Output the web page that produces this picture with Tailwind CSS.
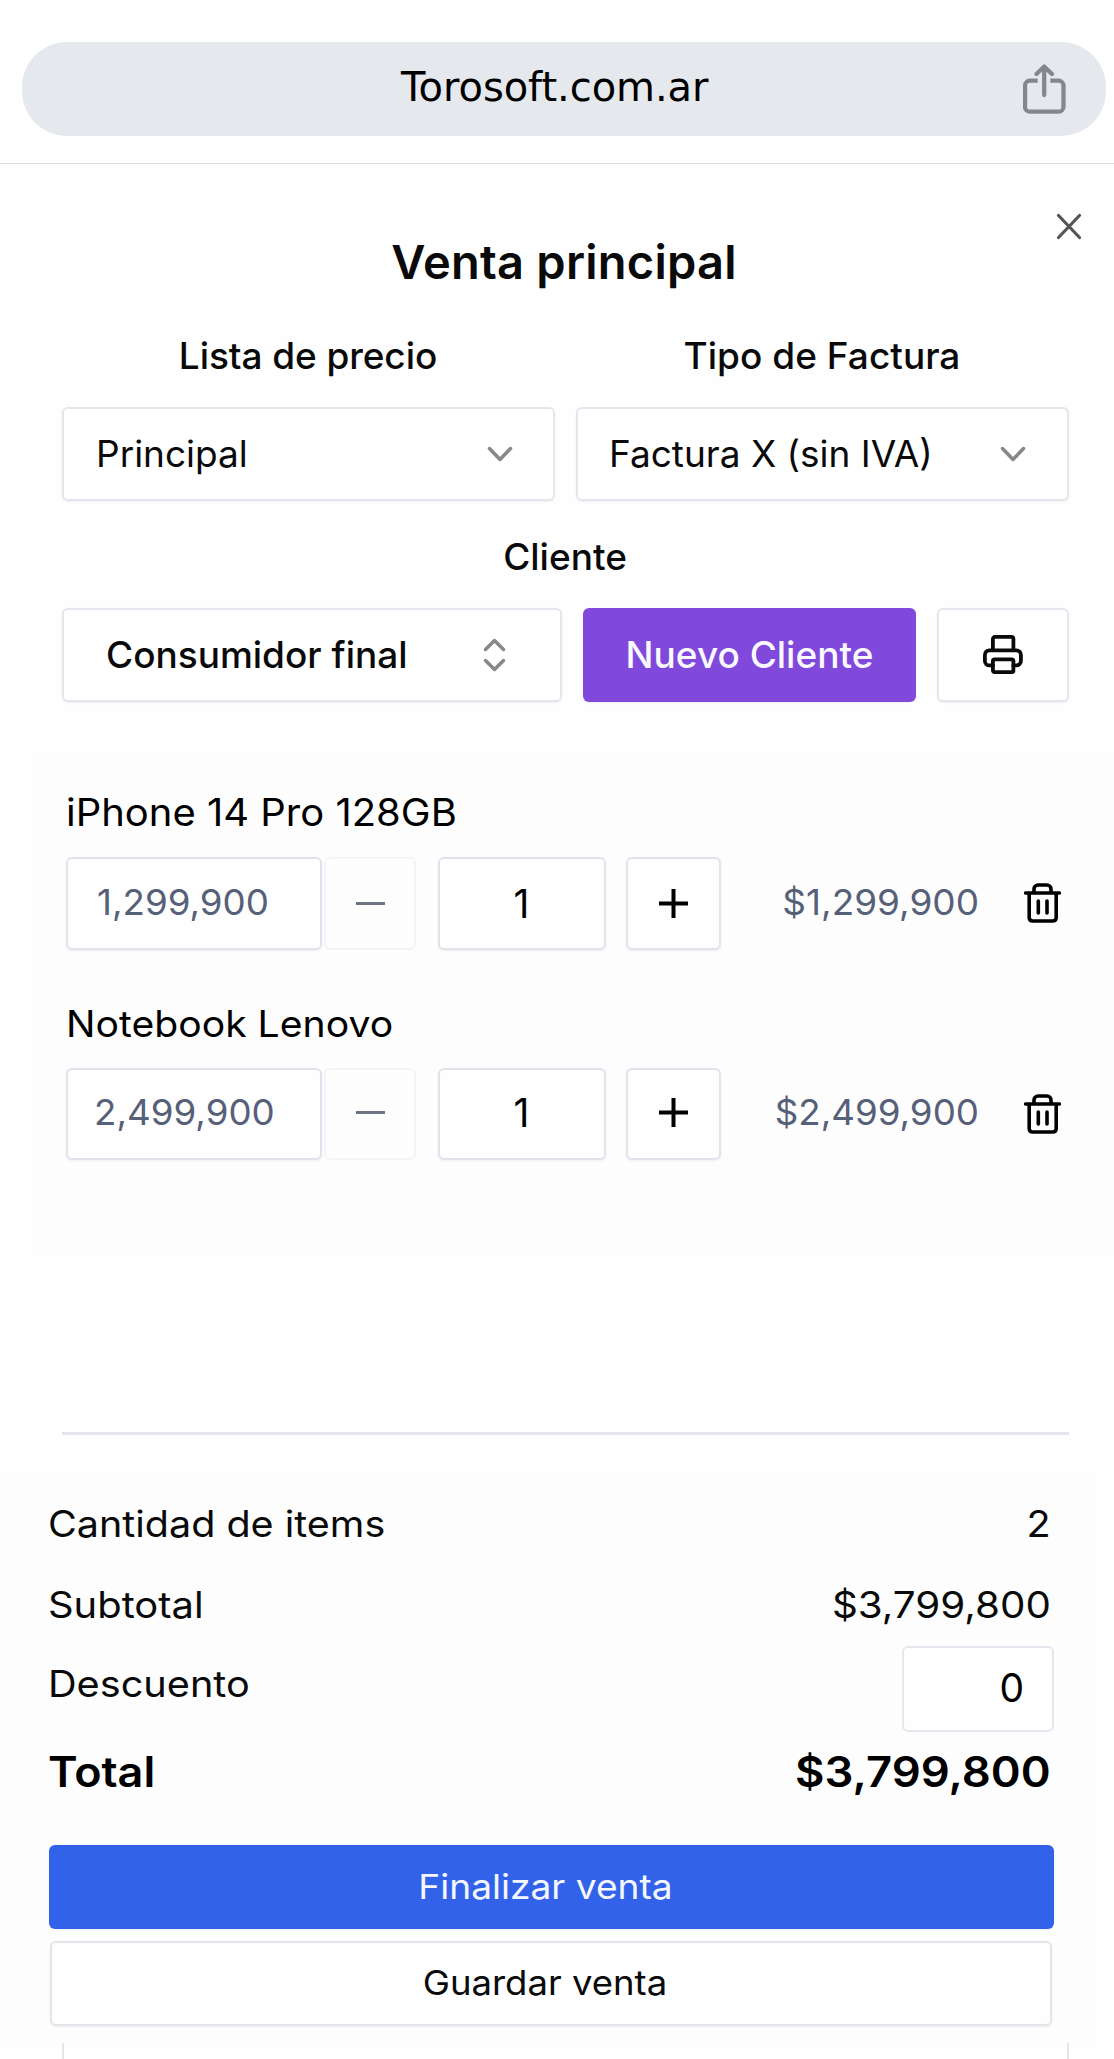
<!DOCTYPE html>
<html lang="es">
<head>
<meta charset="utf-8">
<title>Venta principal</title>
<script src="https://cdn.jsdelivr.net/npm/@tailwindcss/browser@4"></script>
</head>
<body class="bg-white">
<div class="flex h-[2059px] w-[1114px] flex-col overflow-hidden bg-white font-['Inter',sans-serif] text-[#0a0a0b]">

  <!-- Browser address bar -->
  <header class="h-[164px] shrink-0 border-b border-[#dcdcde] pt-[42px] pr-2 pl-[22px]">
    <div class="flex h-[94px] items-center justify-between rounded-[45px] bg-[#e5e8ec] pr-10 pl-[379px]">
      <span class="pb-1 font-['DejaVu_Sans',sans-serif] text-[40px] leading-none tracking-[-0.06px] text-black">Torosoft.com.ar</span>
      <svg class="h-[50px] w-[43px]" viewBox="0 0 43 50" fill="none" stroke="#85878c" stroke-width="4.300" stroke-linecap="round" stroke-linejoin="round">
        <path stroke-linecap="butt" d="M14.700 16.700H7a5 5 0 0 0-5 5v21a5 5 0 0 0 5 5h28.500a5 5 0 0 0 5-5v-21a5 5 0 0 0-5-5h-8.200"/>
        <path d="M21.200 31V3M13.500 10l7.700-7.500 7.700 7.500"/>
      </svg>
    </div>
  </header>

  <main class="relative flex flex-1 flex-col bg-[#fefefe]">
    <button class="absolute top-[49px] right-8 h-[27px] w-[26px]" aria-label="Cerrar">
      <svg class="h-full w-full" viewBox="0 0 26 27" fill="none" stroke="#555" stroke-width="3.200" stroke-linecap="round"><path d="M2.500 2.500l21 22M23.500 2.500l-21 22"/></svg>
    </button>

    <section class="pr-[45px] pl-[62px] pt-[70px]">
      <h1 class="pr-[3px] text-center text-[47px] leading-[56px] font-semibold tracking-[0.24px]">Venta principal</h1>

      <div class="mt-[44px] grid grid-cols-[493px_493px] justify-between text-[37px]">
        <div>
          <div class="pr-px text-center leading-[44px] font-medium tracking-[-0.08px]">Lista de precio</div>
          <div class="mt-[29px] flex h-[94px] items-center justify-between rounded-md border-2 border-[#e4e6ed] bg-white pr-[40px] pl-[32px] leading-none shadow-sm shadow-black/5">
            <span class="pb-[2px]">Principal</span>
            <svg class="h-4 w-[26px]" viewBox="0 0 26 16" fill="none" stroke="#888" stroke-width="3.500" stroke-linecap="round" stroke-linejoin="round"><path d="M2.500 2.500L13 13.500 23.500 2.500"/></svg>
          </div>
        </div>
        <div>
          <div class="pr-px text-center leading-[44px] font-medium tracking-[0.03px]">Tipo de Factura</div>
          <div class="mt-[29px] flex h-[94px] items-center justify-between rounded-md border-2 border-[#e4e6ed] bg-white pr-[41px] pl-[31px] leading-none shadow-sm shadow-black/5">
            <span class="pb-[2px]">Factura X (sin IVA)</span>
            <svg class="h-4 w-[26px]" viewBox="0 0 26 16" fill="none" stroke="#888" stroke-width="3.500" stroke-linecap="round" stroke-linejoin="round"><path d="M2.500 2.500L13 13.500 23.500 2.500"/></svg>
          </div>
        </div>
      </div>

      <div class="mt-[34px] pr-px text-center text-[37px] leading-[44px] font-medium">Cliente</div>
      <div class="mt-[29px] flex gap-[21px] text-[37px] leading-none font-medium">
        <div class="flex h-[94px] w-[500px] items-center justify-between rounded-md border-2 border-[#e4e6ed] bg-white pr-[54px] pl-[42px] shadow-sm shadow-black/5">
          <span class="pb-[2px]">Consumidor final</span>
          <svg class="h-[34px] w-[23px]" viewBox="0 0 23 34" fill="none" stroke="#888" stroke-width="3.500" stroke-linecap="round" stroke-linejoin="round"><path d="M2.500 11.500l9-9 9 9M2.500 22.500l9 9 9-9"/></svg>
        </div>
        <button class="h-[94px] w-[333px] rounded-md bg-[#8049db] pb-px text-[#faf8ff] shadow-sm shadow-black/5">Nuevo Cliente</button>
        <button class="flex h-[94px] w-[132px] items-center justify-center rounded-md border-2 border-[#e4e6ed] bg-white shadow-sm shadow-black/5" aria-label="Imprimir">
          <svg class="size-10" viewBox="0 0 40 40" fill="none" stroke="#0a0a0b" stroke-width="3.800" stroke-linecap="round" stroke-linejoin="round">
            <path d="M9.900 15V3.900a2 2 0 0 1 2-2h16.500a2 2 0 0 1 2 2V15"/>
            <path d="M9.900 30.400H6.400a4.500 4.500 0 0 1-4.500-4.500v-6a4.500 4.500 0 0 1 4.500-4.500h27a4.500 4.500 0 0 1 4.500 4.500v6a4.500 4.500 0 0 1-4.500 4.500h-3"/>
            <rect x="9.900" y="24.300" width="20.500" height="12.900" rx="1.600"/>
          </svg>
        </button>
      </div>
    </section>

    <!-- Line items -->
    <section class="mt-14 ml-[37px] h-[492px] bg-[#fdfdfd] pt-[30px] pr-[53px] pl-[29px]">
      <div class="origin-left scale-x-[1.052] text-[38px] leading-[48px] whitespace-nowrap text-black">iPhone 14 Pro 128GB</div>
      <div class="mt-[21px] flex h-[93px] items-center leading-none">
        <div class="flex h-full w-[256px] items-center rounded-md border-2 border-[#e0e3eb] bg-[#fefefe] pb-1 pl-[29px] text-[36px] text-[#566079] shadow-sm shadow-black/5"><span class="origin-left scale-x-[1.02]">1,299,900</span></div>
        <button class="ml-[2px] flex h-full w-[92px] items-center justify-center rounded-md border-2 border-[#f3f4f7]" aria-label="Restar"><span class="h-[3px] w-[29px] bg-[#6c7484]"></span></button>
        <div class="ml-[22px] flex h-full w-[168px] items-center justify-center rounded-md border-2 border-[#e0e3eb] bg-[#fefefe] pr-px pb-px text-[39px] text-black shadow-sm shadow-black/5">1</div>
        <button class="ml-5 flex h-full w-[95px] items-center justify-center rounded-md border-2 border-[#e0e3eb] bg-[#fefefe] shadow-sm shadow-black/5" aria-label="Sumar">
          <svg class="size-[29px]" viewBox="0 0 29 29" stroke="#000" stroke-width="4"><path d="M0 14.500h29M14.500 0v29"/></svg>
        </button>
        <span class="flex-1 origin-right scale-x-[1.026] pr-px pb-1 text-right text-[36px] text-[#566079]">$1,299,900</span>
        <button class="ml-11 pb-px" aria-label="Eliminar">
          <svg class="h-10 w-[37px]" viewBox="0 0 37 40" fill="none" stroke="#000" stroke-width="3.600" stroke-linecap="round" stroke-linejoin="round">
            <path d="M1.700 10h33.600M5.200 10v25a3.500 3.500 0 0 0 3.500 3h20a3.500 3.500 0 0 0 3.500-3V10M10 10V6a4 4 0 0 1 4-4h9a4 4 0 0 1 4 4v4M14.300 18v12M23 18v12"/>
          </svg>
        </button>
      </div>

      <div class="mt-[50px] origin-left scale-x-[1.058] text-[37px] leading-[48px] whitespace-nowrap text-black">Notebook Lenovo</div>
      <div class="mt-5 flex h-[92px] items-center leading-none">
        <div class="flex h-full w-[256px] items-center rounded-md border-2 border-[#e0e3eb] bg-[#fefefe] pb-[5px] pl-[26px] text-[36px] text-[#566079] shadow-sm shadow-black/5"><span class="origin-left scale-x-[1.02]">2,499,900</span></div>
        <button class="ml-[2px] flex h-full w-[92px] items-center justify-center rounded-md border-2 border-[#f3f4f7] pb-1" aria-label="Restar"><span class="h-[3px] w-[29px] bg-[#6c7484]"></span></button>
        <div class="ml-[22px] flex h-full w-[168px] items-center justify-center rounded-md border-2 border-[#e0e3eb] bg-[#fefefe] pr-px pb-[3px] text-[39px] text-black shadow-sm shadow-black/5">1</div>
        <button class="ml-5 flex h-full w-[95px] items-center justify-center rounded-md border-2 border-[#e0e3eb] bg-[#fefefe] pb-1 shadow-sm shadow-black/5" aria-label="Sumar">
          <svg class="size-[29px]" viewBox="0 0 29 29" stroke="#000" stroke-width="4"><path d="M0 14.500h29M14.500 0v29"/></svg>
        </button>
        <span class="flex-1 origin-right scale-x-[1.02] pr-px pb-[5px] text-right text-[36px] text-[#566079]">$2,499,900</span>
        <button class="ml-11" aria-label="Eliminar">
          <svg class="h-10 w-[37px]" viewBox="0 0 37 40" fill="none" stroke="#000" stroke-width="3.600" stroke-linecap="round" stroke-linejoin="round">
            <path d="M1.700 10h33.600M5.200 10v25a3.500 3.500 0 0 0 3.500 3h20a3.500 3.500 0 0 0 3.500-3V10M10 10V6a4 4 0 0 1 4-4h9a4 4 0 0 1 4 4v4M14.300 18v12M23 18v12"/>
          </svg>
        </button>
      </div>
    </section>

    <div class="mt-[182px] mr-[45px] ml-[62px] h-[3px] shrink-0 bg-[#e3e5ec]"></div>

    <!-- Totals -->
    <section class="mt-[42px] mr-[23px] h-[566px] shrink-0 bg-[#fdfdfd] pt-[23px] pr-[37px] pl-12 text-[37px] leading-[48px]">
      <div class="flex justify-between pr-[3px]">
        <span class="origin-left scale-x-[1.067]">Cantidad de items</span>
        <span class="origin-right scale-x-[1.07]">2</span>
      </div>
      <div class="mt-[33px] flex justify-between pr-[3px]">
        <span class="origin-left scale-x-[1.079]">Subtotal</span>
        <span class="origin-right scale-x-[1.09]">$3,799,800</span>
      </div>
      <div class="mt-[17px] flex h-[86px] items-center justify-between">
        <span class="origin-left scale-x-[1.072] pb-[10px]">Descuento</span>
        <div class="flex h-full w-[152px] items-center justify-end rounded-md border-2 border-[#e4e7ef] bg-[#fefefe] pr-[28px] pb-[3px] text-[39px] text-black">0</div>
      </div>
      <div class="mt-[12px] flex justify-between pr-[3px] text-[42px] leading-[56px] font-semibold text-black">
        <span class="origin-left scale-x-[1.07]">Total</span>
        <span class="origin-right scale-x-[1.08]">$3,799,800</span>
      </div>
      <button class="mt-[45px] ml-px flex h-[84px] w-[1005px] items-center justify-center rounded-md bg-[#3262e9] pr-[12px] text-[34px] text-[#f4f7ff] shadow-sm shadow-black/5"><span class="scale-x-[1.092]">Finalizar venta</span></button>
      <button class="mt-3 ml-[2px] flex h-[85px] w-[1002px] items-center justify-center rounded-md border-2 border-[#e2e5ec] bg-[#fefefe] pr-[12px] pb-[2px] text-[34px] shadow-sm shadow-black/5"><span class="scale-x-[1.073]">Guardar venta</span></button>
    </section>

    <div class="mr-[45px] ml-[62px] h-4 shrink-0 border-x-2 border-[#e4e6ed]"></div>
  </main>
</div>
</body>
</html>
